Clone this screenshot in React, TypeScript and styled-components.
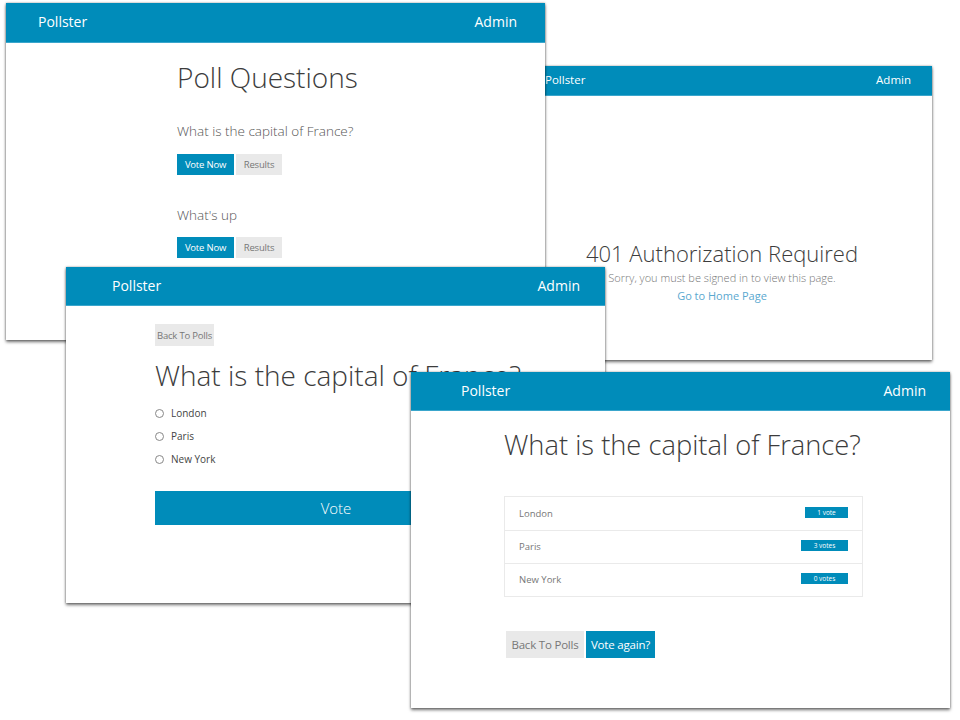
import React from "react";
import styled, { createGlobalStyle } from "styled-components";

const GlobalStyle = createGlobalStyle`
  html, body {
    margin: 0;
    padding: 0;
    background: #fff;
    font-family: "Open Sans", "Liberation Sans", sans-serif;
  }
`;

const BLUE = "#008cba";

const Desktop = styled.div`
  position: relative;
  width: 960px;
  height: 720px;
  overflow: hidden;
  background: #fff;
`;

const Window = styled.div<{ $x: number; $y: number; $w: number; $h: number; $z: number }>`
  position: absolute;
  left: ${({ $x }) => $x}px;
  top: ${({ $y }) => $y}px;
  width: ${({ $w }) => $w}px;
  height: ${({ $h }) => $h}px;
  z-index: ${({ $z }) => $z};
  background: #fff;
  box-shadow: 0 2px 3px rgba(0, 0, 0, 0.55), 0 0 2px rgba(0, 0, 0, 0.35);
  display: flex;
  flex-direction: column;
  overflow: hidden;
`;

const TopBar = styled.div<{ $h: number; $pl: number; $pr: number; $fs: number }>`
  height: ${({ $h }) => $h}px;
  flex: none;
  background: ${BLUE};
  border-bottom: 1px solid #3aa6cc;
  box-sizing: border-box;
  display: flex;
  align-items: center;
  justify-content: space-between;
  padding: 0 ${({ $pr }) => $pr}px 2px ${({ $pl }) => $pl}px;
  color: #fff;
  font-size: ${({ $fs }) => $fs}px;
  font-weight: 400;
`;

const Body = styled.div<{ $pt: number; $pl: number }>`
  padding: ${({ $pt }) => $pt}px 0 0 ${({ $pl }) => $pl}px;
  display: flex;
  flex-direction: column;
  align-items: flex-start;
`;

const CenterBody = styled.div<{ $pt: number }>`
  padding-top: ${({ $pt }) => $pt}px;
  display: flex;
  flex-direction: column;
  align-items: center;
`;

const Title = styled.h1<{ $fs: number; $mt?: number }>`
  margin: ${({ $mt }) => $mt || 0}px 0 0;
  font-size: ${({ $fs }) => $fs}px;
  line-height: ${({ $fs }) => Math.round($fs * 1.25)}px;
  font-weight: 300;
  color: #3c3c3c;
  white-space: nowrap;
`;

const Question = styled.div<{ $mt: number }>`
  margin-top: ${({ $mt }) => $mt}px;
  font-size: 13.5px;
  line-height: 20px;
  font-weight: 300;
  color: #555;
`;

const ButtonRow = styled.div<{ $mt: number; $ml?: number }>`
  margin: ${({ $mt }) => $mt}px 0 0 ${({ $ml }) => $ml || 0}px;
  display: flex;
  gap: 2px;
`;

const Btn = styled.button<{ $primary?: boolean; $h: number; $w: number; $fs: number }>`
  height: ${({ $h }) => $h}px;
  width: ${({ $w }) => $w}px;
  padding: 0;
  border: none;
  font-family: inherit;
  font-size: ${({ $fs }) => $fs}px;
  font-weight: 400;
  background: ${({ $primary }) => ($primary ? BLUE : "#e9e9e9")};
  color: ${({ $primary }) => ($primary ? "#fff" : "#777")};
  letter-spacing: -0.2px;
`;

const VoteButton = styled.button`
  margin-top: 24px;
  width: 362px;
  height: 34px;
  border: none;
  background: ${BLUE};
  color: #fff;
  font-family: inherit;
  font-size: 15px;
  font-weight: 300;
`;

const Options = styled.div`
  margin-top: 12px;
  display: flex;
  flex-direction: column;
  gap: 7px;
`;

const Option = styled.label`
  display: flex;
  align-items: center;
  gap: 7px;
  height: 16px;
  font-size: 10px;
  color: #444;
`;

const Radio = styled.span`
  width: 7px;
  height: 7px;
  border-radius: 50%;
  border: 1px solid #888;
  background: #fff;
`;

const ResultTable = styled.div`
  margin-top: 34px;
  width: 359px;
  border: 1px solid #eaeaea;
  box-sizing: border-box;
`;

const ResultRow = styled.div`
  height: 33px;
  box-sizing: border-box;
  display: flex;
  align-items: center;
  justify-content: space-between;
  padding: 0 14px 1px 14px;
  font-size: 9.5px;
  color: #777;
  & + & {
    border-top: 1px solid #eaeaea;
  }
`;

const Badge = styled.span<{ $w: number }>`
  width: ${({ $w }) => $w}px;
  height: 11px;
  margin-top: -2px;
  background: ${BLUE};
  color: #fff;
  font-size: 6.5px;
  line-height: 11px;
  text-align: center;
`;

const SubText = styled.div`
  margin-top: 3px;
  font-size: 11px;
  line-height: 16px;
  color: #777;
  font-weight: 300;
`;

const HomeLink = styled.a`
  margin-top: 2px;
  font-size: 11px;
  line-height: 16px;
  color: #5aa8cf;
  text-decoration: none;
`;

const results = [
  { city: "London", votes: "1 vote", w: 43 },
  { city: "Paris", votes: "3 votes", w: 47 },
  { city: "New York", votes: "0 votes", w: 47 },
];

export default function App() {
  return (
    <Desktop>
      <GlobalStyle />

      {/* 401 page */}
      <Window $x={512} $y={66} $w={420} $h={294} $z={1}>
        <TopBar $h={30} $pl={33} $pr={21} $fs={11.5}>
          <span>Pollster</span>
          <span>Admin</span>
        </TopBar>
        <CenterBody $pt={143}>
          <Title $fs={22}>401 Authorization Required</Title>
          <SubText>Sorry, you must be signed in to view this page.</SubText>
          <HomeLink href="#">Go to Home Page</HomeLink>
        </CenterBody>
      </Window>

      {/* poll list */}
      <Window $x={6} $y={3} $w={539} $h={337} $z={2}>
        <TopBar $h={40} $pl={32} $pr={28} $fs={14}>
          <span>Pollster</span>
          <span>Admin</span>
        </TopBar>
        <Body $pt={17} $pl={171}>
          <Title $fs={28}>Poll Questions</Title>
          <Question $mt={26}>What is the capital of France?</Question>
          <ButtonRow $mt={13}>
            <Btn $primary $h={21} $w={57} $fs={9.5}>Vote Now</Btn>
            <Btn $h={21} $w={46} $fs={9.5}>Results</Btn>
          </ButtonRow>
          <Question $mt={30}>What's up</Question>
          <ButtonRow $mt={12}>
            <Btn $primary $h={21} $w={57} $fs={9.5}>Vote Now</Btn>
            <Btn $h={21} $w={46} $fs={9.5}>Results</Btn>
          </ButtonRow>
        </Body>
      </Window>

      {/* voting page */}
      <Window $x={66} $y={267} $w={539} $h={336} $z={3}>
        <TopBar $h={39} $pl={46} $pr={25} $fs={14}>
          <span>Pollster</span>
          <span>Admin</span>
        </TopBar>
        <Body $pt={18} $pl={89}>
          <Btn $h={22} $w={59} $fs={9.5}>Back To Polls</Btn>
          <Title $fs={28} $mt={12}>What is the capital of France?</Title>
          <Options>
            <Option><Radio />London</Option>
            <Option><Radio />Paris</Option>
            <Option><Radio />New York</Option>
          </Options>
          <VoteButton>Vote</VoteButton>
        </Body>
      </Window>

      {/* results page */}
      <Window $x={411} $y={372} $w={539} $h={336} $z={4}>
        <TopBar $h={39} $pl={50} $pr={24} $fs={14}>
          <span>Pollster</span>
          <span>Admin</span>
        </TopBar>
        <Body $pt={17} $pl={93}>
          <Title $fs={27.3}>What is the capital of France?</Title>
          <ResultTable>
            {results.map((r) => (
              <ResultRow key={r.city}>
                <span>{r.city}</span>
                <Badge $w={r.w}>{r.votes}</Badge>
              </ResultRow>
            ))}
          </ResultTable>
          <ButtonRow $mt={34} $ml={2}>
            <Btn $h={27} $w={78} $fs={11.5}>Back To Polls</Btn>
            <Btn $primary $h={27} $w={69} $fs={11.5}>Vote again?</Btn>
          </ButtonRow>
        </Body>
      </Window>
    </Desktop>
  );
}
